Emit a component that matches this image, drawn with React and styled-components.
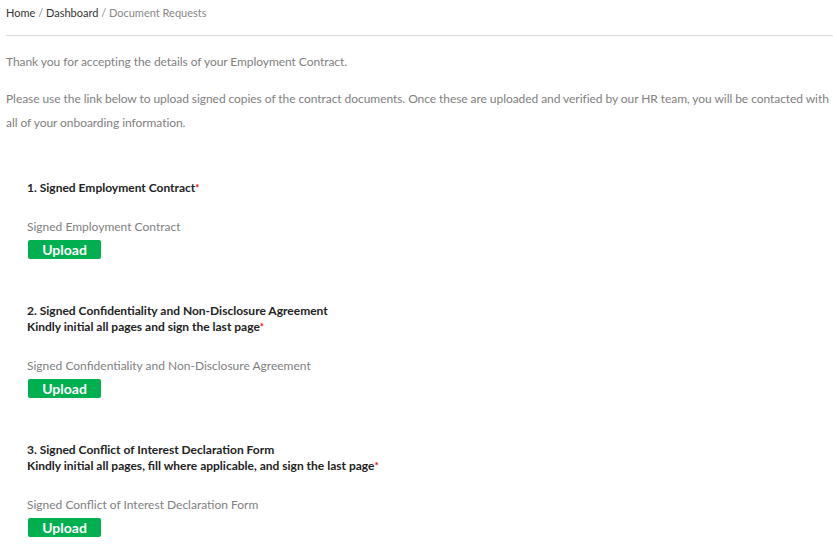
import React from 'react'
import styled, { createGlobalStyle } from 'styled-components'

const Global = createGlobalStyle`
  body {
    margin: 0;
    background: #fff;
    font-family: Lato, "Open Sans", sans-serif;
    font-size: 12px;
    color: #777;
  }
`

const Page = styled.div({
  padding: '0 4px 0 6px',
})

const Breadcrumb = styled.div({
  padding: '5px 0 14px',
  borderBottom: '1px solid #dcdcdc',
  fontSize: 11,
  lineHeight: '16px',
  color: '#888',
  a: {
    color: '#333',
    textDecoration: 'none',
  },
})

const Intro = styled.p({
  margin: '0',
  lineHeight: '24px',
  fontSize: 12,
  letterSpacing: '-0.06px',
  color: '#808080',
  '& + &': {
    marginTop: 13,
  },
})

const IntroWrap = styled.div({
  paddingTop: 14,
})

const Section = styled.div(props => ({
  paddingLeft: 21,
  marginTop: props.$first ? 45 : 44,
}))

const Title = styled.div({
  fontSize: 12,
  fontWeight: 'bold',
  lineHeight: '16px',
  color: '#222',
})

const Req = styled.span({
  color: '#e00',
  fontSize: 10,
  verticalAlign: 'top',
  position: 'relative',
  top: -1,
})

const Label = styled.div({
  marginTop: 23,
  fontSize: 12,
  lineHeight: '16px',
  color: '#808080',
})

const UploadButton = styled.button({
  display: 'flex',
  alignItems: 'center',
  justifyContent: 'center',
  marginTop: 5,
  marginLeft: 1,
  width: 73,
  height: 19,
  padding: 0,
  border: 'none',
  borderRadius: 2,
  background: '#00b050',
  color: '#fff',
  fontFamily: 'Lato, "Open Sans", sans-serif',
  fontWeight: 'bold',
  fontSize: 14,
  cursor: 'pointer',
})

const docs = [
  { title: ['1. Signed Employment Contract'], label: 'Signed Employment Contract' },
  {
    title: ['2. Signed Confidentiality and Non-Disclosure Agreement', 'Kindly initial all pages and sign the last page'],
    label: 'Signed Confidentiality and Non-Disclosure Agreement',
  },
  {
    title: ['3. Signed Conflict of Interest Declaration Form', 'Kindly initial all pages, fill where applicable, and sign the last page'],
    label: 'Signed Conflict of Interest Declaration Form',
  },
]

export default function App() {
  return (
    <>
      <Global />
      <Page>
        <Breadcrumb>
          <a href="#">Home</a> / <a href="#">Dashboard</a> / Document Requests
        </Breadcrumb>
        <IntroWrap>
          <Intro>Thank you for accepting the details of your Employment Contract.</Intro>
          <Intro>
            Please use the link below to upload signed copies of the contract documents. Once these are uploaded and verified by our HR team, you will be contacted with all of your onboarding information.
          </Intro>
        </IntroWrap>
        {docs.map((d, i) => (
          <Section key={i} $first={i === 0}>
            <Title>
              {d.title.map((t, j) => (
                <div key={j}>
                  {t}
                  {j === d.title.length - 1 && <Req>*</Req>}
                </div>
              ))}
            </Title>
            <Label>{d.label}</Label>
            <UploadButton>Upload</UploadButton>
          </Section>
        ))}
      </Page>
    </>
  )
}
